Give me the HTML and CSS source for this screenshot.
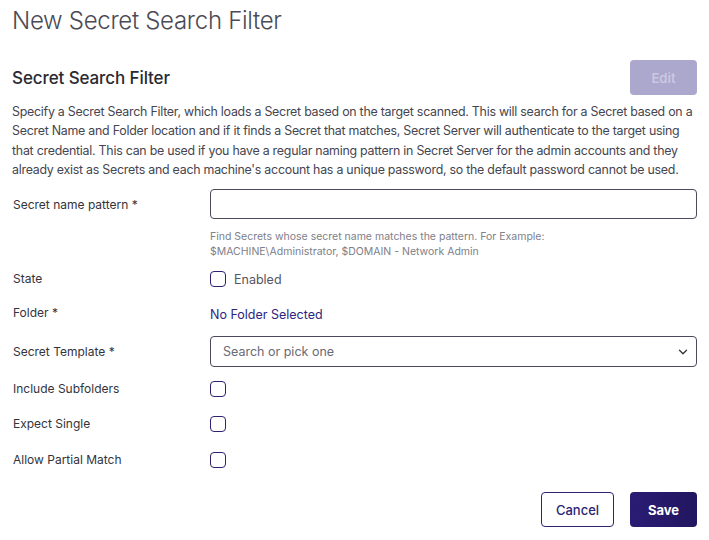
FILE: index.html
```html
<!DOCTYPE html>
<html>
<head>
<meta charset="utf-8">
<link rel="stylesheet" href="styles.css">
</head>
<body>
<div class="page">
  <h1 class="title">New Secret Search Filter</h1>
  <div class="section-head">
    <h2 class="subtitle">Secret Search Filter</h2>
    <button class="btn btn-edit" disabled>Edit</button>
  </div>
  <p class="desc">Specify a Secret Search Filter, which loads a Secret based on the target scanned. This will search for a Secret based on a Secret Name and Folder location and if it finds a Secret that matches, Secret Server will authenticate to the target using that credential. This can be used if you have a regular naming pattern in Secret Server for the admin accounts and they already exist as Secrets and each machine's account has a unique password, so the default password cannot be used.</p>

  <div class="form">
    <div class="row row-input">
      <label class="label">Secret name pattern *</label>
      <div class="field">
        <input class="text-input" type="text">
        <div class="help">Find Secrets whose secret name matches the pattern. For Example:<br>$MACHINE\Administrator, $DOMAIN - Network Admin</div>
      </div>
    </div>
    <div class="row row-check row-state">
      <label class="label">State</label>
      <div class="field check-field"><span class="checkbox"></span><span class="check-text">Enabled</span></div>
    </div>
    <div class="row row-check row-folder">
      <label class="label">Folder *</label>
      <div class="field"><a class="link">No Folder Selected</a></div>
    </div>
    <div class="row row-select">
      <label class="label">Secret Template *</label>
      <div class="field">
        <div class="select"><span class="placeholder">Search or pick one</span>
          <svg class="chev" width="10" height="6" viewBox="0 0 10 6"><path d="M1.5 1.2l3.5 3.5 3.5-3.5" fill="none" stroke="#333" stroke-width="1.3" stroke-linecap="round" stroke-linejoin="round"/></svg>
        </div>
      </div>
    </div>
    <div class="row row-check row-include">
      <label class="label">Include Subfolders</label>
      <div class="field check-field"><span class="checkbox"></span></div>
    </div>
    <div class="row row-check row-expect">
      <label class="label">Expect Single</label>
      <div class="field check-field"><span class="checkbox"></span></div>
    </div>
    <div class="row row-check row-allow">
      <label class="label">Allow Partial Match</label>
      <div class="field check-field"><span class="checkbox"></span></div>
    </div>
  </div>
  <div class="actions">
    <button class="btn btn-cancel">Cancel</button>
    <button class="btn btn-save">Save</button>
  </div>
</div>
</body>
</html>
```
FILE: styles.css
```css
* { box-sizing: border-box; }
body {
  margin: 0;
  font-family: Inter, "Noto Sans", sans-serif;
  color: #2b2b33;
  background: #fff;
}
.page { padding: 0 12px 0 12px; }
.title {
  margin: 0;
  padding-top: 6px;
  font-size: 24px;
  font-weight: 300;
  color: #4a4a55;
  letter-spacing: -0.3px;
  line-height: 30px;
}
.section-head {
  display: flex;
  justify-content: space-between;
  align-items: center;
  margin-top: 24px;
}
.subtitle {
  margin: 0;
  font-size: 17px;
  font-weight: 500;
  color: #2a2a32;
  letter-spacing: -0.1px;
}
.btn {
  font-family: inherit;
  border-radius: 4px;
  font-size: 13px;
  font-weight: 600;
  height: 35px;
  cursor: pointer;
}
.btn-edit {
  width: 67px;
  background: #aca7cc;
  border: none;
  color: #cbc7e2;
}
.desc {
  margin: 7px 0 0 0;
  font-size: 12.4px;
  line-height: 19.3px;
  color: #45454f;
  letter-spacing: -0.25px;
}
.form { margin-top: 10px; }
.row {
  display: grid;
  grid-template-columns: 198px 1fr;
  align-items: start;
}
.label {
  font-size: 12px;
  color: #33333b;
  line-height: 16px;
  padding-left: 1px;
}
.row-input .label { padding-top: 8px; }
.text-input {
  width: 100%;
  height: 30px;
  border: 1px solid #4a4a5c;
  border-radius: 4px;
  font-family: inherit;
  display: block;
}
.help {
  margin-top: 10px;
  font-size: 10.5px;
  line-height: 15px;
  color: #80808a;
}
.row-check { margin-top: 14px; height: 22px; align-items: center; }
.row-state { margin-top: 9px; }
.row-folder { margin-top: 12px; }
.row-expect { margin-top: 13px; }
.row-allow { margin-top: 14px; }
.check-field { display: flex; align-items: center; }
.checkbox {
  width: 16px;
  height: 16px;
  border: 1.5px solid #2b2371;
  border-radius: 4px;
  display: inline-block;
}
.check-text {
  margin-left: 8px;
  font-size: 12.5px;
  color: #55555f;
}
.link {
  font-size: 12.5px;
  color: #2e2580;
  font-weight: 400;
}
.row-select { margin-top: 12px; align-items: center; }
.select {
  height: 31px;
  border: 1px solid #4a4a5c;
  border-radius: 4px;
  display: flex;
  align-items: center;
  justify-content: space-between;
  padding: 0 8px 0 12px;
}
.placeholder { font-size: 12.5px; color: #6a6a74; }
.row-include { margin-top: 11px; }
.actions {
  display: flex;
  justify-content: flex-end;
  gap: 16px;
  margin-top: 21px;
}
.btn-cancel {
  width: 73px;
  background: #fff;
  border: 1px solid #2b2371;
  color: #2b2371;
  font-weight: 500;
}
.btn-save {
  width: 67px;
  background: linear-gradient(90deg, #2a1c74, #221660);
  border: none;
  color: #fff;
  font-weight: 700;
}
```
